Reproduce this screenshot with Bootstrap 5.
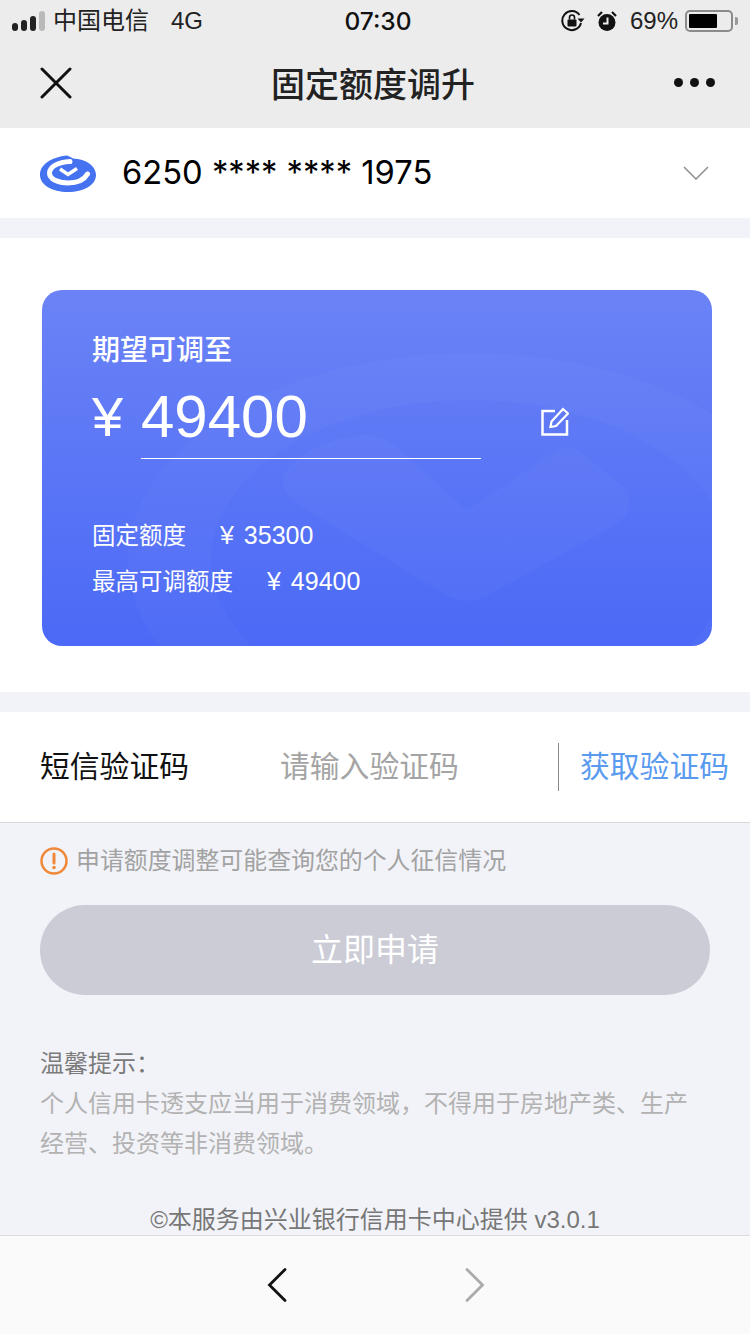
<!DOCTYPE html>
<html lang="zh-CN">
<head>
    <meta charset="UTF-8">
    <meta name="viewport" content="width=device-width, initial-scale=1.0">
    <title>固定额度调升</title>
    <link rel="stylesheet" href="https://cdn.jsdelivr.net/npm/bootstrap@5.3.0/dist/css/bootstrap.min.css">
    <style>
        html, body { height: 1334px; overflow: hidden; }
        body {
            width: 750px;
            background-color: #f2f3f8;
            font-family: "Liberation Sans", "Noto Sans CJK SC", sans-serif;
            color: #000;
        }
        .app-top { background: #ececec; height: 128px; }
        .status-bar { height: 42px; padding: 0 12px; font-size: 24px; color: #222; position: relative; }
        .status-time { position: absolute; left: 6px; right: 0; top: 0; line-height: 42px; text-align: center; font-weight: 500; font-family: Inter, sans-serif; font-size: 24.500px; color: #111; }
        .signal { gap: 3px; align-items: flex-end; }
        .signal i { display: block; width: 6px; background: #222; border-radius: 3px; }
        .signal i:nth-child(1) { height: 8px; }
        .signal i:nth-child(2) { height: 11px; }
        .signal i:nth-child(3) { height: 15px; }
        .signal i:nth-child(4) { height: 20px; background: #b9b9b9; }
        .carrier { margin-left: 8px; }
        .net { margin-left: 22px; }
        .lock-ico { margin-right: 12px; }
        .alarm-ico { margin-right: 13px; }
        .batt { width: 48px; height: 22px; border: 2px solid #8b8b8b; border-radius: 5px; padding: 2px; margin-left: 7px; }
        .batt span { display: block; width: 69%; height: 100%; background: #000; border-radius: 1px; }
        .batt-tip { width: 3px; height: 8px; background: #999; border-radius: 0 2px 2px 0; margin-left: 2px; }
        .nav-row { height: 86px; padding: 0 35px 5px 40px; position: relative; }
        .nav-name { position: absolute; left: 0; right: 4px; top: 20px; text-align: center; font-size: 34px; font-weight: 500; line-height: 46px; color: #222; }
        .dots { gap: 7px; }
        .dots i { display: block; width: 9px; height: 9px; border-radius: 50%; background: #111; }
        .card-row { height: 90px; background: #fff; padding: 0 41px 0 40px; margin-bottom: 20px; }
        .card-num { font-family: Inter, sans-serif; font-size: 32.700px; margin-left: 26px; }
        .limit-sec { background: #fff; height: 454px; padding: 52px 38px 0 42px; margin-bottom: 20px; }
        .limit-box {
            height: 356px; border-radius: 20px; color: #fff; position: relative; overflow: hidden;
            padding: 42px 50px 0;
            background: linear-gradient(180deg, #6b83f6 0%, #4b69f6 100%);
        }
        .limit-mark { position: absolute; left: 0; top: 0; width: 670px; height: 356px; }
        .limit-box > div { position: relative; }
        .limit-title { font-size: 28px; font-weight: 500; line-height: 38px; }
        .limit-amount { margin-top: 3px; height: 86px; padding-top: 13px; }
        .yen-big { font-size: 56px; line-height: 62px; width: 49px; font-weight: 500; }
        .amount-val { width: 340px; height: 73px; border-bottom: 1px solid #fff; font-size: 60px; line-height: 62px; }
        .edit-ico { margin-left: 60px; margin-top: 21px; }
        .limit-line { font-size: 23.500px; height: 46px; line-height: 46px; }
        .limit-line span + span { margin-left: 34px; font-size: 25px; word-spacing: 3px; }
        .limit-lines { margin-top: 53px; }
        .sms-row { height: 111px; background: #fff; border-bottom: 1px solid #d8d8da; padding: 0 21px 0 40px; font-size: 29.800px; }
        .sms-label { width: 240px; color: #111; }
        .sms-hint { flex: 1; color: #a4a4a4; }
        .sms-btn { border-left: 1px solid #8a8a8a; height: 48px; line-height: 48px; padding-left: 21px; color: #5a9bef; }
        .notice { height: 76px; padding: 0 40px; font-size: 23.900px; color: #a2a2a2; margin-bottom: 0; }
        .notice svg { margin-right: 8px; }
        .apply-btn {
            display: block; width: 670px; height: 90px; margin-left: 40px; border-radius: 45px; border: 0;
            background: #cbccd6; color: #fff; font-size: 32px; margin-top: 6px;
        }
        .tips { padding: 0 40px; margin-top: 49px; font-size: 24px; line-height: 40px; color: #b2b2b2; }
        .tips-head { color: #7b7b7b; }
        .copyright { text-align: center; font-size: 24px; line-height: 30px; color: #777; margin-top: 41px; }
        .bottom-bar { height: 99px; background: #fafafa; border-top: 1px solid #dcdcdc; gap: 178px; padding-left: 2px; }
        main { min-height: 0; overflow: hidden; }
    </style>
</head>
<body class="d-flex flex-column">

    <div class="app-top flex-shrink-0">
        <div class="status-bar d-flex align-items-center">
            <div class="signal d-flex"><i></i><i></i><i></i><i></i></div>
            <span class="carrier">中国电信</span>
            <span class="net">4G</span>
            <div class="status-time">07:30</div>
            <div class="ms-auto d-flex align-items-center">
                <svg class="lock-ico" width="24" height="24" viewBox="0 0 24 24" fill="none">
                    <path d="M20 14A9.500 9.500 0 1 1 18.500 6" stroke="#111" stroke-width="2"/>
                    <path d="M23.500 9.500l-3.500 4-3.500-4z" fill="#111"/>
                    <rect x="6.500" y="10.500" width="9" height="7" rx="1" fill="#111"/>
                    <path d="M8.500 10.500V8.500a2.500 2.500 0 0 1 5 0v2" stroke="#111" stroke-width="1.600"/>
                </svg>
                <svg class="alarm-ico" width="20" height="22" viewBox="0 0 20 22">
                    <circle cx="10" cy="12.500" r="8.500" fill="#111"/>
                    <path d="M10.500 7.500V13.500H6" stroke="#ececec" stroke-width="2" fill="none"/>
                    <path d="M1 6l4-4M19 6l-4-4" stroke="#111" stroke-width="2.200"/>
                </svg>
                <span>69%</span>
                <div class="batt"><span></span></div>
                <div class="batt-tip"></div>
            </div>
        </div>
        <div class="nav-row d-flex align-items-center justify-content-between">
            <svg width="32" height="32" viewBox="0 0 32 32"><path d="M2 2l28 28M30 2L2 30" stroke="#111" stroke-width="3" stroke-linecap="round"/></svg>
            <div class="nav-name">固定额度调升</div>
            <div class="dots d-flex"><i></i><i></i><i></i></div>
        </div>
    </div>

    <main class="flex-grow-1">
        <div class="card-row d-flex align-items-center">
            <svg width="56" height="37" viewBox="0 0 56 37">
                <path fill="#4472f0" d="M27 .5C12 2 0 9 0 20c0 10 12 17 28 17s28-7 28-17C56 11 46 4 33 3.500 31 2 29 1 27 .5z"/>
                <path d="M30 6.500C18 7 9.500 12 9.500 18c0 6 8.500 10 18.500 10 9 0 16-3 19.500-9" stroke="#fff" stroke-width="5" fill="none" stroke-linecap="round"/>
                <path d="M20 14l8 5.500 9-6" stroke="#fff" stroke-width="3.500" fill="none"/>
            </svg>
            <div class="card-num">6250 **** **** 1975</div>
            <svg class="ms-auto" width="26" height="14" viewBox="0 0 26 14"><path d="M1 1l12 12L25 1" stroke="#8d8d8d" stroke-width="1.500" fill="none"/></svg>
        </div>

        <div class="limit-sec">
            <div class="limit-box">
                <svg class="limit-mark" viewBox="0 0 670 356">
                    <path fill="#fff" fill-opacity=".022" fill-rule="evenodd" d="M86 270a342 207 0 1 0 684 0a342 207 0 1 0-684 0zM169 270a259 160 0 1 0 518 0a259 160 0 1 0-518 0z"/>
                    <path fill="#fff" fill-opacity=".028" d="M262 165c12-10 36-18 58-20 14-1 22 4 32 10l73 65 84-56c12-8 22-8 32 0l36 29c16 13 14 30-4 42L448 304c-14 9-32 9-46 0L256 214c-26-17-16-36 6-49z"/>
                </svg>
                <div class="limit-title">期望可调至</div>
                <div class="limit-amount d-flex">
                    <div class="yen-big">¥</div>
                    <div class="amount-val">49400</div>
                    <svg class="edit-ico" width="28" height="29" viewBox="0 0 28 29" fill="none" stroke="#fff" stroke-width="2.500">
                        <path d="M14 4H1.500v23.500H26V13"/>
                        <path d="M9.500 20l1-5.500L22 2l5 4.500L15 19z" stroke-width="2.200"/>
                    </svg>
                </div>
                <div class="limit-lines">
                    <div class="limit-line"><span>固定额度</span><span>¥ 35300</span></div>
                    <div class="limit-line"><span>最高可调额度</span><span>¥ 49400</span></div>
                </div>
            </div>
        </div>

        <div class="sms-row d-flex align-items-center">
            <div class="sms-label">短信验证码</div>
            <div class="sms-hint">请输入验证码</div>
            <div class="sms-btn">获取验证码</div>
        </div>

        <div class="notice d-flex align-items-center">
            <svg width="28" height="28" viewBox="0 0 28 28" fill="none">
                <circle cx="14" cy="14" r="12.500" stroke="#f0883a" stroke-width="2.500"/>
                <path d="M14 7v9" stroke="#f0883a" stroke-width="3" stroke-linecap="round"/>
                <circle cx="14" cy="20.500" r="1.800" fill="#f0883a"/>
            </svg>
            <span>申请额度调整可能查询您的个人征信情况</span>
        </div>

        <button class="apply-btn" type="button" disabled>立即申请</button>

        <div class="tips">
            <div class="tips-head">温馨提示：</div>
            <div>个人信用卡透支应当用于消费领域，不得用于房地产类、生产经营、投资等非消费领域。</div>
        </div>

        <div class="copyright">©本服务由兴业银行信用卡中心提供 v3.0.1</div>
    </main>

    <div class="bottom-bar flex-shrink-0 d-flex align-items-center justify-content-center">
        <svg width="20" height="34" viewBox="0 0 20 34"><path d="M18 1.500L2.500 17 18 32.500" stroke="#111" stroke-width="2.800" fill="none" stroke-linecap="round"/></svg>
        <svg width="20" height="34" viewBox="0 0 20 34"><path d="M2 1.500L17.500 17 2 32.500" stroke="#ababab" stroke-width="2.800" fill="none" stroke-linecap="round"/></svg>
    </div>

    <script src="https://cdn.jsdelivr.net/npm/bootstrap@5.3.0/dist/js/bootstrap.bundle.min.js"></script>
</body>
</html>
